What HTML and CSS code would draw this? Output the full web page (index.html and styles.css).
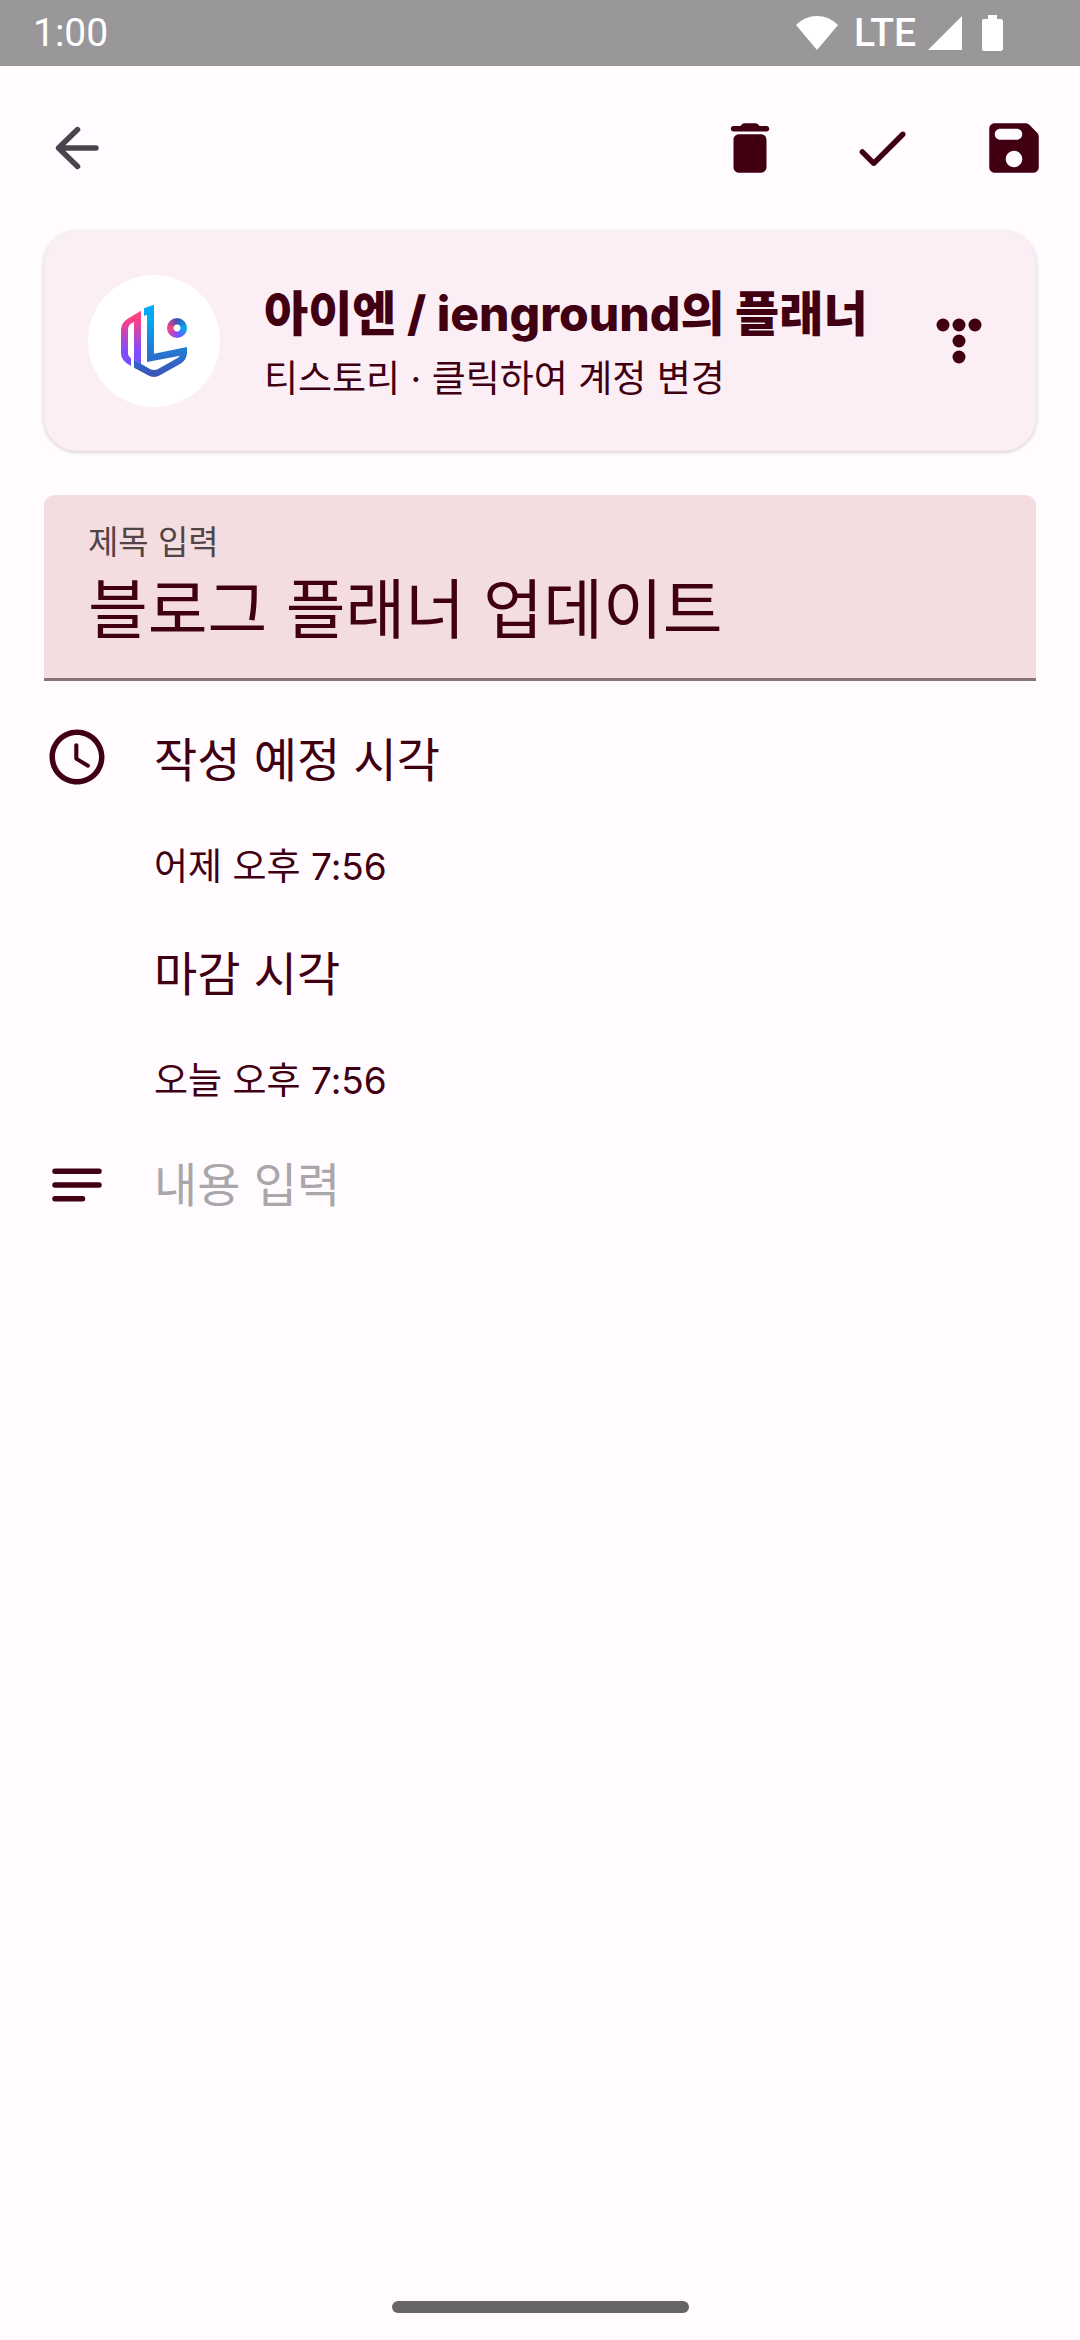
FILE: index.html
```html
<!DOCTYPE html>
<html lang="ko">
<head>
<meta charset="utf-8">
<meta name="viewport" content="width=device-width, initial-scale=1">
<title>블로그 플래너</title>
<link rel="stylesheet" href="styles.css">
</head>
<body>
<div class="status-bar">
  <time class="status-time">1:00</time>
  <div class="status-icons">
    <svg class="status-wifi" viewBox="0 0 42 36" aria-hidden="true"><path d="M0 10Q9 1 21 1T42 10L21 35Z"/></svg>
    <span class="status-network">LTE</span>
    <svg class="status-signal" viewBox="0 0 34 36" aria-hidden="true"><path d="M34 1V35H0Z"/></svg>
    <svg class="status-battery" viewBox="0 0 22 36" aria-hidden="true"><path d="M6 0H15V4H19Q21 4 21 6V34Q21 36 19 36H2Q0 36 0 34V6Q0 4 2 4H6Z"/></svg>
  </div>
</div>

<header class="app-bar">
  <button class="icon-button back" type="button" aria-label="뒤로">
    <svg class="icon" viewBox="0 0 24 24" aria-hidden="true"><path class="stroke" d="M12.2 5.3 5.3 12l6.9 6.7M5.3 12H18.9"/></svg>
  </button>
  <div class="actions">
    <button class="icon-button" type="button" aria-label="삭제">
      <svg class="icon" viewBox="0 0 24 24" aria-hidden="true"><path d="M6 19c0 1.1.9 2 2 2h8c1.1 0 2-.9 2-2V9c0-1.1-.9-2-2-2H8c-1.1 0-2 .9-2 2v10zM18 4h-2.500l-.71-.71c-.18-.18-.44-.29-.7-.29H9.910c-.26 0-.52.11-.7.29L8.500 4H6c-.55 0-1 .45-1 1s.45 1 1 1h12c.55 0 1-.45 1-1s-.45-1-1-1z"/></svg>
    </button>
    <button class="icon-button" type="button" aria-label="완료">
      <svg class="icon" viewBox="0 0 24 24" aria-hidden="true"><path d="M9 16.170 5.530 12.700c-.39-.39-1.020-.39-1.410 0-.39.39-.39 1.020 0 1.410l4.180 4.180c.39.39 1.020.39 1.410 0L20.290 7.710c.39-.39.39-1.020 0-1.410-.39-.39-1.020-.39-1.410 0L9 16.170z"/></svg>
    </button>
    <button class="icon-button" type="button" aria-label="저장">
      <svg class="icon" viewBox="0 0 24 24" aria-hidden="true"><path d="M17.590 3.590c-.38-.38-.89-.59-1.420-.59H5c-1.110 0-2 .9-2 2v14c0 1.100.9 2 2 2h14c1.100 0 2-.9 2-2V7.830c0-.53-.21-1.040-.59-1.410l-2.820-2.830zM12 19c-1.660 0-3-1.340-3-3s1.340-3 3-3 3 1.340 3 3-1.340 3-3 3zm1-10H7c-1.100 0-2-.9-2-2s.9-2 2-2h6c1.100 0 2 .9 2 2s-.9 2-2 2z"/></svg>
    </button>
  </div>
</header>

<main class="editor">
  <button class="account" type="button">
    <span class="avatar">
      <svg class="avatar-logo" viewBox="24 15 396 396" aria-hidden="true">
        <defs>
          <linearGradient id="warm" x1="0" y1="0" x2="0" y2="1"><stop offset=".15" stop-color="#ff4081"/><stop offset=".75" stop-color="#7c4dff"/></linearGradient>
          <linearGradient id="cool" x1="0" y1="0" x2="0" y2="1"><stop offset=".2" stop-color="#03a9f4"/><stop offset="1" stop-color="#3f51b5"/></linearGradient>
        </defs>
        <path fill="url(#warm)" d="M183 122V282L162 270V156Q144 163 144 178V252Q145 260 153 265V288Q123 274 123 250V180Q124 158 143 146Z"/>
        <path fill="url(#cool)" d="M192 115 222 104V251L321 231V250Q319 270 304 280L240 316Q222 326 204 316L162 293V269L210 297Q222 303 234 297L282 270Q295 264 300 257L201 276V134L192 138Z"/>
      </svg>
      <span class="avatar-dot"></span>
    </span>
    <span class="account-text">
      <strong class="account-name">아이엔 / ienground의 플래너</strong>
      <span class="account-note">티스토리 · 클릭하여 계정 변경</span>
    </span>
    <svg class="icon" viewBox="0 0 66 66" aria-hidden="true"><circle cx="17" cy="17" r="6.500"/><circle cx="33" cy="17" r="6.500"/><circle cx="49" cy="17" r="6.500"/><circle cx="33" cy="33" r="6.500"/><circle cx="33" cy="49" r="6.500"/></svg>
  </button>

  <div class="title-field">
    <label class="title-label" for="title">제목 입력</label>
    <input class="title-input" id="title" type="text" value="블로그 플래너 업데이트">
  </div>

  <div class="details">
    <svg class="icon" viewBox="0 0 24 24" aria-hidden="true"><path d="M11.990 2C6.470 2 2 6.480 2 12s4.470 10 9.990 10C17.520 22 22 17.520 22 12S17.520 2 11.990 2zM12 20c-4.420 0-8-3.580-8-8s3.580-8 8-8 8 3.580 8 8-3.580 8-8 8zm-.22-13h-.06c-.4 0-.72.32-.72.72v4.720c0 .35.18.68.49.86l4.150 2.490c.34.2.78.1.98-.24.21-.34.1-.79-.25-.99l-3.870-2.300V7.720c0-.4-.32-.72-.72-.72z"/></svg>
    <h2 class="detail-heading">작성 예정 시각</h2>
    <button class="detail-time" type="button">어제 오후 7:56</button>
    <h2 class="detail-heading">마감 시각</h2>
    <button class="detail-time" type="button">오늘 오후 7:56</button>
    <svg class="icon" viewBox="0 0 24 24" aria-hidden="true"><path class="stroke" d="M4 7H20M4 12H20M4 17H14"/></svg>
    <textarea class="content-input" rows="1" placeholder="내용 입력" aria-label="내용 입력"></textarea>
  </div>
</main>

<div class="gesture-bar"></div>
</body>
</html>
```

FILE: styles.css
```css
* {
  box-sizing: border-box;
}

body {
  display: flex;
  flex-direction: column;
  min-height: 100vh;
  margin: 0;
  background: #fffbff;
  color: #400012;
  font-family: Inter, "Noto Sans CJK KR", sans-serif;
}

button,
input,
textarea {
  padding: 0;
  border: 0;
  background: none;
  color: inherit;
  font-family: inherit;
  outline: none;
}

svg {
  display: block;
  flex: none;
  fill: currentColor;
}

.icon {
  width: 66px;
  height: 66px;
}

.stroke {
  fill: none;
  stroke: currentColor;
  stroke-width: 2;
  stroke-linecap: round;
  stroke-linejoin: round;
}

/* Status bar */

.status-bar {
  display: flex;
  align-items: center;
  justify-content: space-between;
  height: 66px;
  padding: 0 76px 0 33px;
  background: #999799;
  color: #fff;
  font-family: Roboto, sans-serif;
  font-size: 39px;
  line-height: 68px;
}

.status-icons {
  display: flex;
  align-items: center;
}

.status-wifi {
  width: 42px;
  height: 36px;
  margin-right: 16px;
}

.status-network {
  font-weight: 500;
  line-height: 66px;
}

.status-signal {
  width: 34px;
  height: 36px;
  margin: 0 20px 0 12px;
}

.status-battery {
  width: 22px;
  height: 36px;
}

/* App bar */

.app-bar {
  display: flex;
  align-items: flex-start;
  justify-content: space-between;
  height: 165px;
  padding-top: 16px;
}

.actions {
  display: flex;
}

.icon-button {
  display: grid;
  place-items: center;
  width: 132px;
  height: 132px;
}

.back {
  margin-left: 11px;
  color: #49454f;
}

/* Account card */

.editor {
  display: flex;
  flex: 1;
  flex-direction: column;
  padding: 0 44px;
}

.account {
  display: flex;
  align-items: center;
  gap: 44px;
  min-height: 220px;
  padding: 40px 44px;
  border-radius: 33px;
  background: #fbeef5;
  box-shadow: 0 1px 4px rgba(0, 0, 0, 0.2);
  text-align: left;
}

.avatar {
  position: relative;
  flex: none;
  width: 132px;
  height: 132px;
  border-radius: 50%;
  background: #fff;
}

.avatar-dot {
  position: absolute;
  top: 43px;
  left: 79px;
  width: 20px;
  height: 20px;
  border-radius: 50%;
  background:
    radial-gradient(circle, #fff 3px, transparent 4px),
    conic-gradient(#3f51b5, #03a9f4, #7c4dff, #ff4081, #3f51b5);
}

.account-text {
  display: flex;
  flex: 1;
  flex-direction: column;
  padding-top: 8px;
}

.account-name {
  font-size: 48px;
  font-weight: 800;
  line-height: 68px;
}

.account-note {
  font-size: 37px;
  line-height: 62px;
}

/* Title field */

.title-field {
  display: flex;
  flex-direction: column;
  margin-top: 44px;
  padding: 24px 44px 34px;
  border-bottom: 3px solid #857376;
  border-radius: 11px 11px 0 0;
  background: #f3dde0;
}

.title-label {
  color: #524345;
  font-size: 33px;
  line-height: 46px;
}

.title-input {
  width: 100%;
  height: 79px;
  font-size: 65px;
}

/* Details */

.details {
  display: grid;
  grid-template-columns: 66px 1fr;
  column-gap: 44px;
  grid-auto-rows: 107px;
  align-items: center;
  margin-top: 22px;
}

.detail-heading,
.detail-time {
  grid-column: 2;
  margin: 0;
  font-weight: 400;
  text-align: left;
}

.detail-heading {
  font-size: 47px;
}

.detail-time {
  font-size: 37px;
}

.content-input {
  width: 100%;
  font-size: 47px;
  line-height: 66px;
  resize: none;
}

.content-input::placeholder {
  color: #a9a7a9;
  opacity: 1;
}

.gesture-bar {
  align-self: center;
  width: 297px;
  height: 12px;
  margin-bottom: 27px;
  border-radius: 6px;
  background: #676568;
}
```
